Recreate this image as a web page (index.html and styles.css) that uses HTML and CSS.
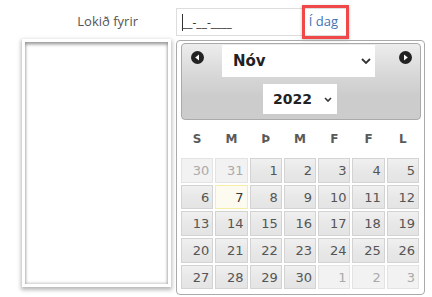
FILE: index.html
```html
<html>
<head>
<meta name="viewport" content="width=device-width, initial-scale=1">
<title>Lokið fyrir</title>
<link rel="stylesheet" href="styles.css">
</head>
<body>
<div class="page">
  <div class="lbl">Lokið fyrir</div>
  <div class="field">
    <span class="mask"><span class="caret"></span>__-__-____</span>
    <span class="today">Í dag</span>
  </div>
  <div class="list"></div>
  <div class="picker">
    <div class="head">
      <div class="row1">
        <svg class="nav prev" width="13" height="13" viewBox="0 0 13 13"><circle cx="6.5" cy="6.5" r="6.5" fill="#222"/><polygon points="8,3.4 4.2,6.5 8,9.6" fill="#fff"/></svg>
        <div class="sel month"><span>Nóv</span><svg width="10" height="6" viewBox="0 0 10 6"><polyline points="1,1 5,5 9,1" fill="none" stroke="#333" stroke-width="1.8"/></svg></div>
        <svg class="nav next" width="13" height="13" viewBox="0 0 13 13"><circle cx="6.5" cy="6.5" r="6.5" fill="#222"/><polygon points="5,3.4 8.8,6.5 5,9.6" fill="#fff"/></svg>
      </div>
      <div class="sel year"><span>2022</span><svg width="8" height="5" viewBox="0 0 8 5"><polyline points="1,1 4,4 7,1" fill="none" stroke="#333" stroke-width="1.6"/></svg></div>
    </div>
    <div class="dow">
      <span>S</span><span>M</span><span>Þ</span><span>M</span><span>F</span><span>F</span><span>L</span>
    </div>
    <div class="days">
      <span class="d other">30</span><span class="d other">31</span><span class="d">1</span><span class="d">2</span><span class="d">3</span><span class="d">4</span><span class="d">5</span>
      <span class="d">6</span><span class="d now">7</span><span class="d">8</span><span class="d">9</span><span class="d">10</span><span class="d">11</span><span class="d">12</span>
      <span class="d">13</span><span class="d">14</span><span class="d">15</span><span class="d">16</span><span class="d">17</span><span class="d">18</span><span class="d">19</span>
      <span class="d">20</span><span class="d">21</span><span class="d">22</span><span class="d">23</span><span class="d">24</span><span class="d">25</span><span class="d">26</span>
      <span class="d">27</span><span class="d">28</span><span class="d">29</span><span class="d">30</span><span class="d other">1</span><span class="d other">2</span><span class="d other">3</span>
    </div>
  </div>
</div>
</body>
</html>
```

FILE: styles.css
```css
body{
margin:0;
background:#fff;
font-family:'Open Sans',sans-serif;
}
.page{
display:grid;
grid-template-columns:176px 249px;
grid-template-rows:40px auto;
}
.lbl{
font-size:13px;
color:#555;
text-align:right;
padding-right:38px;
padding-top:12px;
}
.field{
margin-top:8px;
height:26px;
width:170px;
border:1px solid #ddd;
display:flex;
align-items:center;
justify-content:space-between;
}
.mask{
display:flex;
align-items:center;
padding-left:5px;
font-size:12px;
color:#333;
}
.caret{
display:inline-block;
width:1px;
height:17px;
background:#333;
margin-right:-1px;
}
.today{
box-sizing:border-box;
height:34px;
flex-shrink:0;
border:3px solid #f04848;
box-shadow:0 1px 3px rgba(0,0,0,0.25);
color:#3f72b5;
font-size:13px;
padding:4px 8px 0 4px;
margin-right:-2px;
}
.list{
box-sizing:border-box;
margin:-1px 0 0 22px;
width:149px;
height:248px;
border:3px solid #fff;
box-shadow:0 2px 4px 1px rgba(0,0,0,0.28), inset 0 0 3px 1px rgba(0,0,0,0.22), inset 0 3px 3px 0 rgba(0,0,0,0.25);
}
.picker{
box-sizing:border-box;
width:249px;
height:255px;
border:1px solid #aaa;
border-radius:4px;
padding:2px 3px 5px 4px;
}
.head{
height:74px;
border:1px solid #aaa;
border-radius:4px;
background:linear-gradient(#ededed,#d6d6d6 45%,#cccccc 70%,#cccccc);
padding-top:1px;
}
.row1{
display:flex;
align-items:flex-start;
}
.nav{
margin-top:6px;
}
.prev{margin-left:9px;}
.next{margin-left:auto;margin-right:8px;}
.sel{
box-sizing:border-box;
background:#fff;
display:flex;
align-items:center;
justify-content:space-between;
font-family:'DejaVu Sans',sans-serif;
font-weight:bold;
color:#222;
}
.month{
margin-left:18px;
width:153px;
height:32px;
font-size:15px;
padding:0 4px 0 11px;
}
.year{
margin:7px 0 0 81px;
width:74px;
height:30px;
font-size:14px;
padding:0 5px 0 10px;
}
.dow{
display:grid;
grid-template-columns:repeat(7,1fr);
column-gap:2px;
width:238px;
height:37px;
align-items:center;
text-align:center;
font-family:'DejaVu Sans',sans-serif;
font-weight:bold;
font-size:12px;
color:#5a5a5a;
}
.days{
display:grid;
grid-template-columns:repeat(7,1fr);
grid-auto-rows:24.7px;
gap:2px;
width:238px;
margin-top:1px;
}
.d{
box-sizing:border-box;
border:1px solid #d3d3d3;
background:linear-gradient(#f0f0f0,#e8e8e8 50%,#e4e4e4);
font-family:'DejaVu Sans',sans-serif;
font-size:13px;
color:#555;
text-align:right;
padding-right:3px;
line-height:23px;
}
.d.other{
border-color:#e3e3e3;
background:#f2f2f2;
color:#aaa;
}
.d.now{
border-color:#f6eca8;
background:#fdfbef;
color:#363636;
}
```
